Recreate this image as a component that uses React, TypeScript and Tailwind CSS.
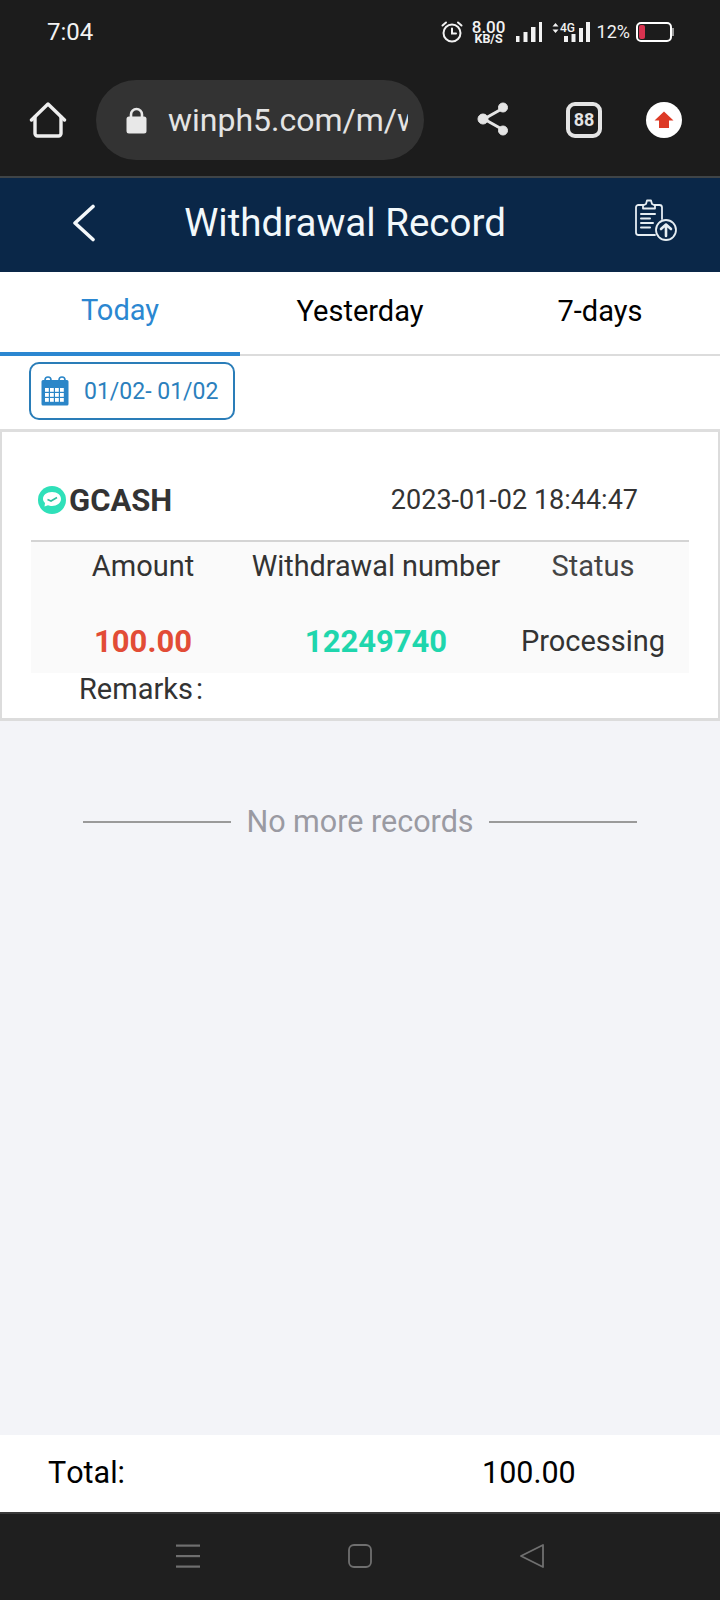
const font = "font-['Roboto',sans-serif]";

/** Android status bar icons */
function StatusBar() {
  return (
    <div className="flex h-[62px] items-center justify-between pl-[47px] pr-[46px] pt-[2px] text-white">
      <span className="text-[24px] leading-none text-[#f2f2f2]">7:04</span>
      <div className="flex items-center">
        <svg width="24" height="24" viewBox="0 0 24 24" fill="none" stroke="#f2f2f2" strokeWidth="2" strokeLinecap="round">
          <circle cx="12" cy="13" r="8.500" />
          <path d="M12 8.500v5h4M2.500 5.500l3.500-3M21.500 5.500l-3.500-3" />
        </svg>
        <div className="ml-[8px] flex w-[34px] flex-col items-center text-[#f2f2f2]">
          <span className="text-[17px] font-medium leading-[14px]">8.00</span>
          <span className="text-[12.500px] font-bold leading-[10px]">KB/S</span>
        </div>
        <svg className="ml-[10px]" width="26" height="22" viewBox="0 0 26 22" fill="#f2f2f2">
          <rect x="0" y="15" width="3.500" height="6" />
          <rect x="7.500" y="11" width="4" height="10" />
          <rect x="15" y="6" width="4.500" height="15" />
          <rect x="23" y="1" width="3" height="20" />
        </svg>
        <svg className="ml-[10px]" width="38" height="22" viewBox="0 0 38 22" fill="#f2f2f2">
          <path d="M3.500 2l3 3.500H.5zM3.500 12l3-3.500H.5z" />
          <rect x="12" y="15" width="4" height="6" />
          <rect x="19.500" y="13" width="4" height="8" />
          <rect x="27" y="7" width="4" height="14" />
          <rect x="34" y="1" width="4" height="20" />
          <text x="8" y="11" fontSize="13" fontFamily="Roboto, sans-serif" fontWeight="500" textLength="15" lengthAdjust="spacingAndGlyphs">4G</text>
        </svg>
        <span className="ml-[7px] text-[18px] leading-none text-[#f2f2f2]">12%</span>
        <div className="ml-[6px] flex items-center">
          <div className="h-[20px] w-[36px] rounded-[5px] border-2 border-white p-[1px]">
            <div className="h-full w-[6px] rounded-[2px] bg-[#d8324f]" />
          </div>
          <div className="h-[8px] w-[2px] bg-[#9a9a9a]" />
        </div>
      </div>
    </div>
  );
}

/** Browser toolbar: home, address pill, share, tabs, update */
function BrowserBar() {
  return (
    <div className="flex h-[116px] items-start border-b-2 border-[#3f4447] pl-[29px]">
      <svg className="mt-[40px] shrink-0" width="38" height="36" viewBox="0 0 38 36" fill="none" stroke="#eeeeee" strokeWidth="3.400" strokeLinecap="round" strokeLinejoin="round">
        <path d="M2.500 18 19 2l16.500 16" />
        <path d="M6 15v16.500a2.500 2.500 0 0 0 2.500 2.500h21a2.500 2.500 0 0 0 2.500-2.500V15" />
      </svg>
      <div className="ml-[29px] mt-[18px] flex h-[80px] w-[328px] shrink-0 items-center rounded-[40px] bg-[#333333] pl-[30px] pr-[16px]">
        <svg className="shrink-0" width="21" height="27" viewBox="0 0 21 27" fill="#e8e8e8">
          <path d="M5 11V7.500a5.500 5.500 0 0 1 11 0V11" fill="none" stroke="#e8e8e8" strokeWidth="2.600" />
          <rect x="0.500" y="9.500" width="20" height="17" rx="2.500" />
        </svg>
        <span className="ml-[21px] min-w-0 overflow-hidden whitespace-nowrap text-[32px] leading-[40px] text-[#e4e4e4]">winph5.com/m/w</span>
      </div>
      <svg className="ml-[53px] mt-[40px] shrink-0" width="34" height="34" viewBox="0 0 34 34" fill="#e4e4e4" stroke="#e4e4e4">
        <path d="M26.500 6 7 17l19.500 11" fill="none" strokeWidth="3" />
        <circle cx="26" cy="5.500" r="4.500" />
        <circle cx="6" cy="17" r="5" />
        <circle cx="26" cy="28.500" r="4.500" />
      </svg>
      <div className="ml-[55px] mt-[40px] flex h-[36px] w-[36px] shrink-0 items-center justify-center rounded-[9px] border-[4px] border-[#e4e4e4] text-[18px] font-bold leading-none text-[#e4e4e4]">
        88
      </div>
      <div className="ml-[44px] mt-[40px] flex h-[36px] w-[36px] shrink-0 items-center justify-center rounded-full bg-white">
        <svg width="20" height="20" viewBox="0 0 20 20" fill="#dd3a26">
          <path d="M10 1.500 19.500 10.500H15V18H5V10.500H0.500Z" />
        </svg>
      </div>
    </div>
  );
}

export default function App() {
  return (
    <div className={`${font} flex h-[1600px] w-[720px] flex-col bg-[#f3f4f8]`}>
      <div className="bg-[#1c1c1c]">
        <StatusBar />
        <BrowserBar />
      </div>

      {/* Page header */}
      <div className="flex h-[94px] items-center bg-[#0a2748] pl-[72px] pr-[43px] text-white">
        <svg className="mb-[4px]" width="24" height="38" viewBox="0 0 24 38" fill="none" stroke="#f4f8fb" strokeWidth="3.600" strokeLinecap="round" strokeLinejoin="round">
          <path d="M21 2.500 3 19l18 16.500" />
        </svg>
        <h1 className="flex-1 whitespace-nowrap pb-[4px] pr-[41px] text-center text-[38.500px] font-normal leading-none text-[#f2f8fb]">Withdrawal Record</h1>
        <svg className="mb-[8px]" width="42" height="44" viewBox="0 0 42 44" fill="none" stroke="#e6edf2" strokeWidth="1.800" strokeLinecap="round" strokeLinejoin="round">
          <path d="M20 36H3.500A2.500 2.500 0 0 1 1 33.500v-25A2.500 2.500 0 0 1 3.500 6H9l2-1 1-3.500h4L17 5l2 1h5.500A2.500 2.500 0 0 1 27 8.500V20" />
          <path d="M8 6v3.500h12V6" />
          <path d="M6 15h14M6 19.500h9M6 24h12M6 28.500h9" strokeWidth="2" />
          <circle cx="31" cy="31" r="10" fill="#0a2748" />
          <path d="M31 37V25.500M26 30l5-4.500 5 4.500" strokeWidth="2.600" />
        </svg>
      </div>

      {/* Range tabs */}
      <div className="flex h-[84px] border-b-2 border-[#dcdcdc] bg-white">
        <div className="-mb-[2px] flex w-[240px] items-center justify-center border-b-4 border-[#2b87d1] pb-[2px] text-[29px] text-[#2b87d1]">Today</div>
        <div className="flex w-[240px] items-center justify-center pb-[2px] text-[29px] text-black">Yesterday</div>
        <div className="flex w-[240px] items-center justify-center pb-[2px] text-[29px] text-black">7-days</div>
      </div>

      {/* Date filter */}
      <div className="h-[76px] border-b-[3px] border-[#dedede] bg-white pl-[29px] pt-[6px]">
        <div className="flex h-[58px] w-[206px] items-center rounded-[10px] border-2 border-[#2a7db8] pl-[10px] text-[#2b80bd]">
          <svg width="28" height="30" viewBox="0 0 28 30" fill="#2b86c8">
            <path d="M2 4h24a1.500 1.500 0 0 1 1.500 1.500V28a1.500 1.500 0 0 1-1.500 1.500H2A1.500 1.500 0 0 1 .5 28V5.500A1.500 1.500 0 0 1 2 4z" />
            <circle cx="7" cy="4" r="3" fill="none" stroke="#2b86c8" strokeWidth="1.600" />
            <circle cx="21" cy="4" r="3" fill="none" stroke="#2b86c8" strokeWidth="1.600" />
            <g fill="#ffffff">
              {[12, 17, 22].map((y) =>
                [4, 9, 14, 19].map((x) => <rect key={`${x}-${y}`} x={x} y={y} width="3.800" height="3.800" />),
              )}
            </g>
          </svg>
          <span className="ml-[15px] whitespace-nowrap text-[23px] leading-none">01/02- 01/02</span>
        </div>
      </div>

      {/* Record card */}
      <div className="h-[289px] border-x-[2px] border-b-[3px] border-[#dcdcdc] bg-white">
        <div className="flex h-[108px] items-center pl-[36px] pr-[80px] pt-[28px] text-[#333333]">
          <svg width="28" height="28" viewBox="0 0 28 28">
            <circle cx="14" cy="14" r="14" fill="#2fe0b9" />
            <path d="M14 6c5.500 0 9 3 9 7s-4 7-9 7c-1.500 0-3-.3-4-.8L6.500 20.500l.5-3.500C5.700 15.800 5 14.500 5 13c0-4 3.500-7 9-7z" fill="#ffffff" />
            <path d="M9.500 13.500l3.500 1.500 6-3.500" fill="none" stroke="#2fbf9f" strokeWidth="1.600" />
          </svg>
          <span className="ml-[3px] text-[31px] font-bold leading-none">GCASH</span>
          <span className="ml-auto text-[27px] leading-none">2023-01-02 18:44:47</span>
        </div>
        <div className="mx-[29px] h-[133px] border-t-2 border-[#d4d4d4] bg-[#fafafa]">
          <div className="grid h-[50px] grid-cols-[224px_242px_192px] items-center whitespace-nowrap pb-[2px] text-center text-[29px] leading-none text-[#333333]">
            <span>Amount</span>
            <span className="justify-self-center text-[28.800px]">Withdrawal number</span>
            <span className="text-[#444444]">Status</span>
          </div>
          <div className="mt-[24px] grid h-[50px] grid-cols-[224px_242px_192px] items-center text-center leading-none">
            <span className="text-[31px] font-bold text-[#e24c36]">100.00</span>
            <span className="text-[31px] font-bold text-[#1fd6ad]">12249740</span>
            <span className="text-[29px] text-[#333333]">Processing</span>
          </div>
        </div>
        <div className="-mt-[1px] flex pl-[77px] text-[29px] leading-[34px] text-[#333333]">
          <span>Remarks</span>
          <span className="ml-[3px]">:</span>
        </div>
      </div>

      {/* End of list */}
      <div className="flex flex-1 items-start justify-center pt-[86px]">
        <div className="flex items-center gap-[15px] text-[30.500px] leading-none text-[#9a9aa2]">
          <div className="h-[2px] w-[148px] bg-[#9a9a9a]" />
          <span>No more records</span>
          <div className="h-[2px] w-[148px] bg-[#9a9a9a]" />
        </div>
      </div>

      {/* Total */}
      <div className="flex h-[77px] items-center bg-white pl-[48px] text-[30.500px] leading-none text-black">
        <span className="w-[434px] [font-kerning:none]">Total:</span>
        <span>100.00</span>
      </div>

      {/* Android nav bar */}
      <div className="flex h-[88px] items-center justify-center gap-[148px] border-t-2 border-[#3a3a3a] bg-[#1f1f1f] pb-[2px]">
        <svg width="24" height="24" viewBox="0 0 24 24" fill="#6f6f6f">
          <rect x="0" y="0.500" width="24" height="2.200" />
          <rect x="0" y="11" width="24" height="2.200" />
          <rect x="0" y="21.500" width="24" height="2.200" />
        </svg>
        <svg width="24" height="24" viewBox="0 0 24 24" fill="none" stroke="#6f6f6f" strokeWidth="1.800">
          <rect x="1" y="1" width="22" height="22" rx="5" />
        </svg>
        <svg width="24" height="24" viewBox="0 0 24 24" fill="none" stroke="#6f6f6f" strokeWidth="1.800" strokeLinejoin="round">
          <path d="M23 1v22L1 12z" />
        </svg>
      </div>
    </div>
  );
}
